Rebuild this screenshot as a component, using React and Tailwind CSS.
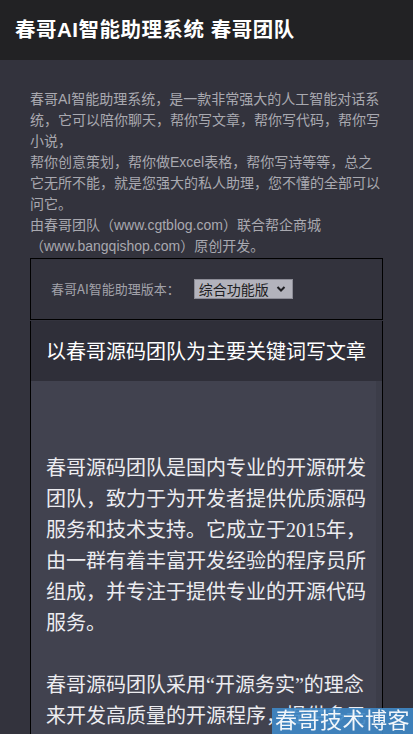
import { useState } from 'react'

const sans = { fontFamily: '"Noto Sans CJK SC", "Liberation Sans", sans-serif' }

export default function App() {
    const [version, setVersion] = useState('综合功能版')

    return (
        <div className="min-h-screen bg-[#33333d]" style={sans}>
            <header className="h-[60px] bg-[#222224] flex items-center px-[15px]">
                <h1 className="text-[20.5px] font-bold text-white tracking-[0.5px]" style={{ fontFamily: '"Liberation Sans", "Noto Sans CJK SC", sans-serif' }}>
                    春哥AI智能助理系统 春哥团队
                </h1>
            </header>

            <main className="px-[30px] pt-[29px]">
                <p className="text-[14px] leading-[21px] text-[#a9a9b0]" style={{ fontFamily: '"Liberation Sans", "Noto Sans CJK SC", sans-serif' }}>
                    春哥AI智能助理系统，是一款非常强大的人工智能对话系统，它可以陪你聊天，帮你写文章，帮你写代码，帮你写小说，
                    <br />
                    帮你创意策划，帮你做Excel表格，帮你写诗等等，总之它无所不能，就是您强大的私人助理，您不懂的全部可以问它。
                    <br />
                    由春哥团队（www.cgtblog.com）联合帮企商城（www.bangqishop.com）原创开发。
                </p>

                <div className="mt-px h-[62px] border border-black flex items-center px-[20px] gap-[14px]">
                    <span className="text-[13px] text-[#a2a2aa]">春哥AI智能助理版本：</span>
                    <div className="relative">
                        <select
                            value={version}
                            onChange={(e) => setVersion(e.target.value)}
                            className="appearance-none block h-[20px] w-[99px] bg-[#b3b3bc] border border-[#8c8c96] text-[14px] leading-[18px] text-[#1e1e22] pl-[4px] outline-none"
                        >
                            <option>综合功能版</option>
                            <option>写作版</option>
                            <option>编程版</option>
                        </select>
                        <svg className="absolute right-[7px] top-[6px] pointer-events-none" width="10" height="8" viewBox="0 0 10 8">
                            <path d="M1.5 2 L5 5.5 L8.5 2" fill="none" stroke="#1e1e22" strokeWidth="2" />
                        </svg>
                    </div>
                </div>

                <section className="mt-px border-x border-black">
                    <div className="h-[60px] bg-[#2f2f39] flex items-center px-[15px]">
                        <h2 className="text-[20px] text-white">以春哥源码团队为主要关键词写文章</h2>
                    </div>
                    <div className="flex bg-[#41424f]">
                        <div
                            className="flex-1 pl-[15px] pr-[10px] pt-[72px] pb-[40px] text-[20px] leading-[31px] text-[#ececf0]"
                            style={{ fontFamily: '"Liberation Serif", "Noto Sans CJK SC", serif' }}
                        >
                            <p>春哥源码团队是国内专业的开源研发团队，致力于为开发者提供优质源码服务和技术支持。它成立于2015年，由一群有着丰富开发经验的程序员所组成，并专注于提供专业的开源代码服务。</p>
                            <p className="mt-[31px]">春哥源码团队采用“开源务实”的理念来开发高质量的开源程序，提供多元化的服务，包括技术咨询、定制开发和运维支持，帮助开发者快速搭建自己的项目。</p>
                        </div>
                        <div className="w-[6px] bg-[#3c3d49]" />
                    </div>
                </section>
            </main>

            <div
                className="fixed right-0 bottom-0 h-[26px] pl-[3px] pr-[3px] bg-[#3f88c6]/90 text-[22px] leading-[26px] text-[#f2f6fa] tracking-[0.5px]"
                style={{ fontFamily: '"Liberation Serif", "Noto Sans CJK SC", serif' }}
            >
                春哥技术博客
            </div>
        </div>
    )
}
